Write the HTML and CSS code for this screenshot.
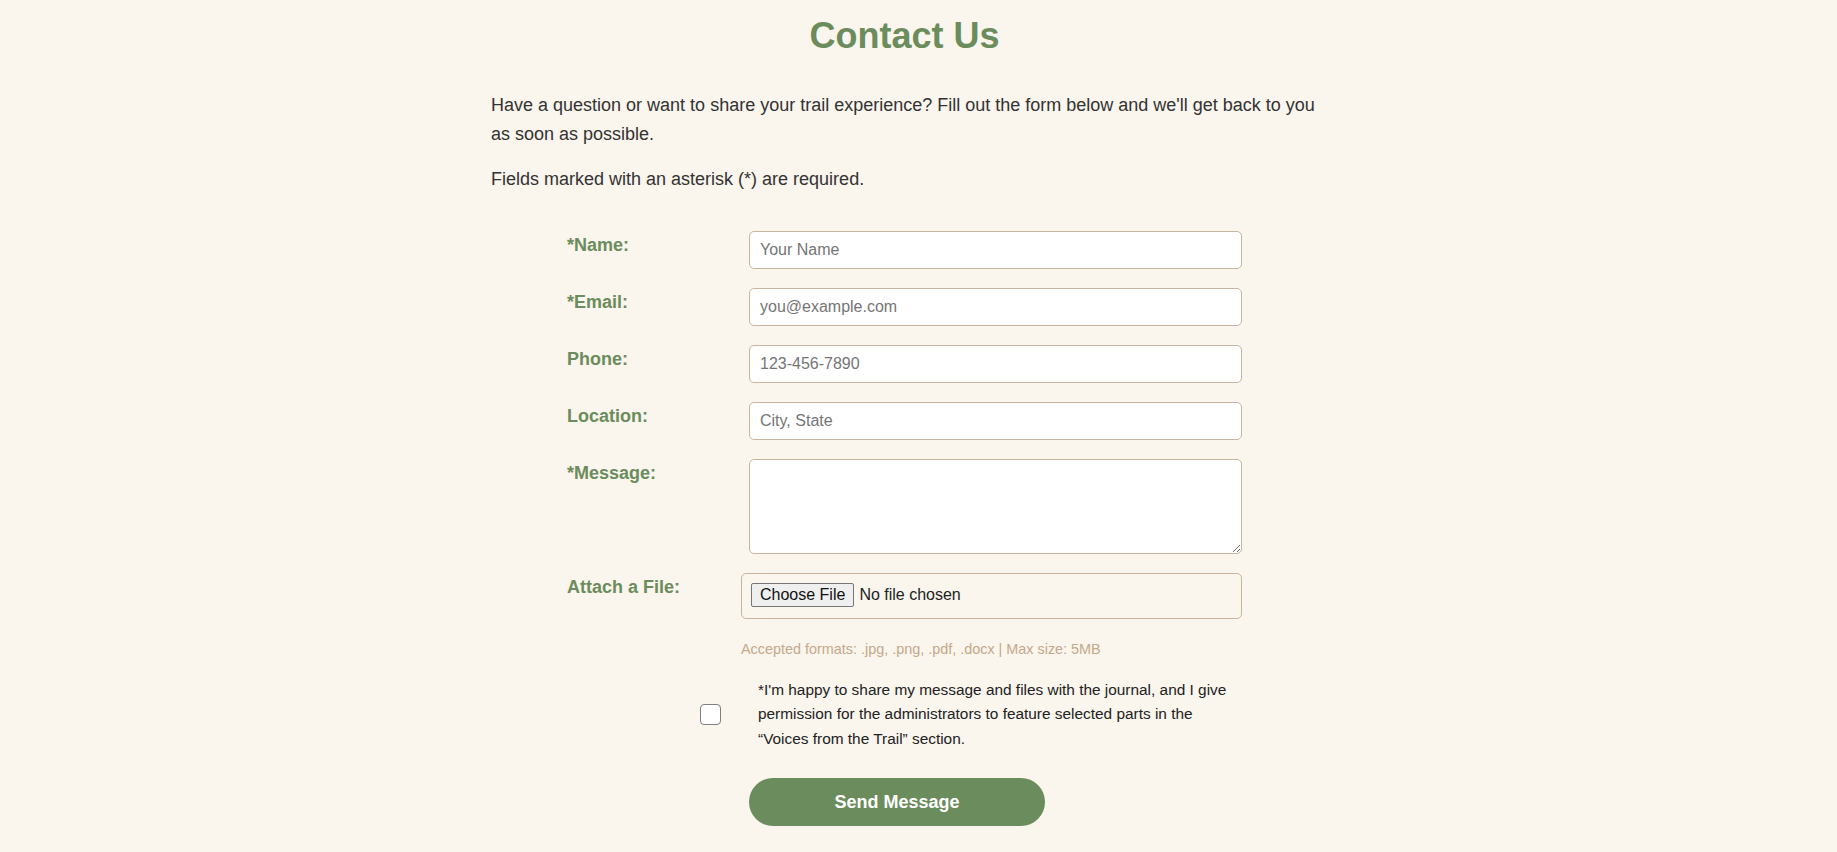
FILE: index.html
```html
<!DOCTYPE html>
<html lang="en">
<head>
<meta charset="utf-8">
<title>Contact Us</title>
<link rel="stylesheet" href="styles.css">
</head>
<body>
<main class="page">
  <h1 class="title">Contact Us</h1>
  <p class="intro">Have a question or want to share your trail experience? Fill out the form below and we'll get back to you as soon as possible.</p>
  <p class="intro">Fields marked with an asterisk (*) are required.</p>

  <form class="contact-form">
    <label class="field-label" for="name">*Name:</label>
    <input class="text-input" id="name" type="text" placeholder="Your Name">

    <label class="field-label" for="email">*Email:</label>
    <input class="text-input" id="email" type="email" placeholder="you@example.com">

    <label class="field-label" for="phone">Phone:</label>
    <input class="text-input" id="phone" type="tel" placeholder="123-456-7890">

    <label class="field-label" for="location">Location:</label>
    <input class="text-input" id="location" type="text" placeholder="City, State">

    <label class="field-label" for="message">*Message:</label>
    <textarea class="text-input message-input" id="message"></textarea>

    <label class="field-label" for="file">Attach a File:</label>
    <input class="file-input" id="file" type="file">

    <p class="help-text">Accepted formats: .jpg, .png, .pdf, .docx | Max size: 5MB</p>

    <div class="consent">
      <input class="consent-box" id="consent" type="checkbox">
      <label class="consent-text" for="consent">*I'm happy to share my message and files with the journal, and I give permission for the administrators to feature selected parts in the “Voices from the Trail” section.</label>
    </div>

    <button class="send-btn" type="submit">Send Message</button>
  </form>
</main>
</body>
</html>
```

FILE: styles.css
```css
* {
  box-sizing: border-box;
}

body {
  margin: 0;
  padding-right: 28px;
  background: #faf5ed;
  font-family: "Liberation Sans", Arial, sans-serif;
  color: #333333;
  line-height: 1.6;
}

.page {
  max-width: 827px;
  margin: 0 auto;
}

.title {
  margin: 14px 0 0;
  font-size: 36px;
  line-height: 1.2;
  font-weight: bold;
  color: #6b8c5c;
  text-align: center;
}

.intro {
  margin: 16px 0;
  font-size: 18px;
}

.title + .intro {
  margin-top: 34px;
}

.contact-form {
  width: 675px;
  margin: 37px auto 0;
  display: grid;
  grid-template-columns: 174px 1fr;
  row-gap: 19px;
  align-items: start;
}

.field-label {
  grid-column: 1;
  font-size: 18px;
  font-weight: bold;
  color: #6b8c5c;
}

.text-input {
  grid-column: 2;
  margin-left: 8px;
  width: calc(100% - 8px);
  height: 38px;
  padding: 0 10px;
  border: 1px solid #c8b59f;
  border-radius: 5px;
  background: #ffffff;
  font-family: "Liberation Sans", Arial, sans-serif;
  font-size: 16px;
  color: #333333;
}

.text-input::placeholder {
  color: #757575;
}

.message-input {
  height: 95px;
  padding: 10px;
  resize: vertical;
}

.file-input {
  grid-column: 2;
  width: 100%;
  padding: 9px 9px 11px;
  border: 1px solid #c8b59f;
  border-radius: 5px;
  background: transparent;
  font-family: "Liberation Sans", Arial, sans-serif;
  font-size: 16px;
  line-height: normal;
  color: #222222;
}

.file-input::file-selector-button {
  font-family: "Liberation Sans", Arial, sans-serif;
  font-size: 16px;
  padding: 2px 8px;
  margin-right: 5px;
  border: 1px solid #767676;
  border-radius: 2px;
  background: #efefef;
  color: #111111;
}

.help-text {
  grid-column: 2;
  margin: 0;
  font-size: 14.4px;
  color: #c4a98b;
}

.consent {
  grid-column: 1 / -1;
  margin-top: -2px;
  padding-left: 133px;
  display: flex;
  align-items: center;
  gap: 37px;
}

.consent-box {
  appearance: none;
  -webkit-appearance: none;
  flex: none;
  width: 21px;
  height: 21px;
  margin: 0;
  border: 1px solid #808080;
  border-radius: 4px;
  background: #ffffff;
}

.consent-text {
  flex: 1;
  font-size: 15.4px;
  line-height: 24.5px;
  color: #222222;
}

.send-btn {
  grid-column: 2;
  justify-self: start;
  margin: 8px 0 0 8px;
  width: 296px;
  height: 48px;
  border: none;
  border-radius: 24px;
  background: #6b8c5c;
  color: #ffffff;
  font-family: "Liberation Sans", Arial, sans-serif;
  font-size: 18px;
  font-weight: bold;
}
```
